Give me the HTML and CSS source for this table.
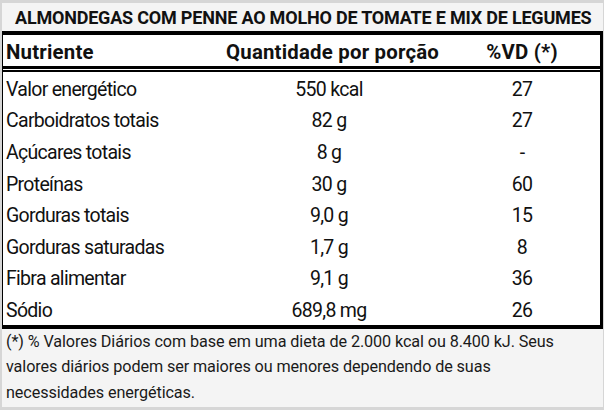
FILE: index.html
```html
<!DOCTYPE html>
<html lang="pt">
<head>
<meta charset="utf-8">
<link rel="stylesheet" href="styles.css">
</head>
<body>
<div class="card">
  <div class="title">ALMONDEGAS COM PENNE AO MOLHO DE TOMATE E MIX DE LEGUMES</div>
  <div class="table">
    <div class="row head">
      <div class="c1">Nutriente</div>
      <div class="c2">Quantidade por porção</div>
      <div class="c3">%VD (*)</div>
    </div>
    <div class="dbl"></div>
    <div class="row"><div class="c1">Valor energético</div><div class="c2">550 kcal</div><div class="c3">27</div></div>
    <div class="row"><div class="c1">Carboidratos totais</div><div class="c2">82 g</div><div class="c3">27</div></div>
    <div class="row"><div class="c1">Açúcares totais</div><div class="c2">8 g</div><div class="c3">-</div></div>
    <div class="row"><div class="c1">Proteínas</div><div class="c2">30 g</div><div class="c3">60</div></div>
    <div class="row"><div class="c1">Gorduras totais</div><div class="c2">9,0 g</div><div class="c3">15</div></div>
    <div class="row"><div class="c1">Gorduras saturadas</div><div class="c2">1,7 g</div><div class="c3">8</div></div>
    <div class="row"><div class="c1">Fibra alimentar</div><div class="c2">9,1 g</div><div class="c3">36</div></div>
    <div class="row"><div class="c1">Sódio</div><div class="c2">689,8 mg</div><div class="c3">26</div></div>
  </div>
  <div class="foot">(*) % Valores Diários com base em uma dieta de 2.000 kcal ou 8.400 kJ. Seus valores diários podem ser maiores ou menores dependendo de suas necessidades energéticas.</div>
</div>
</body>
</html>
```
FILE: styles.css
```css
html, body {
  margin: 0;
  padding: 0;
  background: #f4f4f4;
}
.card {
  width: 604px;
  height: 410px;
  box-sizing: border-box;
  border-top: 3px solid #d6d6d6;
  border-bottom: 3px solid #d6d6d6;
  border-left: 2px solid #d6d6d6;
  border-right: 1px solid #d6d6d6;
  background: #f4f4f4;
  font-family: Roboto, "Liberation Sans", sans-serif;
  color: #111;
  overflow: hidden;
}
.title {
  height: 28px;
  padding-left: 13px;
  font-weight: 700;
  font-size: 18px;
  line-height: 30px;
  letter-spacing: -0.2px;
  white-space: nowrap;
}
.table {
  margin-left: -2px;
  width: 597px;
  border: 4px solid #000;
  border-left-width: 3px;
  background: #fff;
}
.row {
  display: grid;
  grid-template-columns: 223px 206px 1fr;
  height: 31.6px;
  box-sizing: border-box;
  padding-top: 3px;
  align-items: center;
  font-size: 19.5px;
  letter-spacing: -0.7px;
}
.head {
  height: 34px;
  font-weight: 700;
  font-size: 20.4px;
  letter-spacing: 0.2px;
  border-bottom: 3px solid #000;
  padding-top: 2px;
}
.dbl {
  margin-top: 1px;
  height: 2px;
  background: #000;
}
.c1 {
  padding-left: 3px;
  white-space: nowrap;
}
.c2 {
  text-align: center;
  white-space: nowrap;
}
.c3 {
  text-align: center;
  padding-left: 12px;
  white-space: nowrap;
}
.foot {
  padding: 0 30px 0 4px;
  font-size: 16.2px;
  line-height: 25.5px;
  letter-spacing: -0.1px;
  color: #1a1a1a;
}
```
